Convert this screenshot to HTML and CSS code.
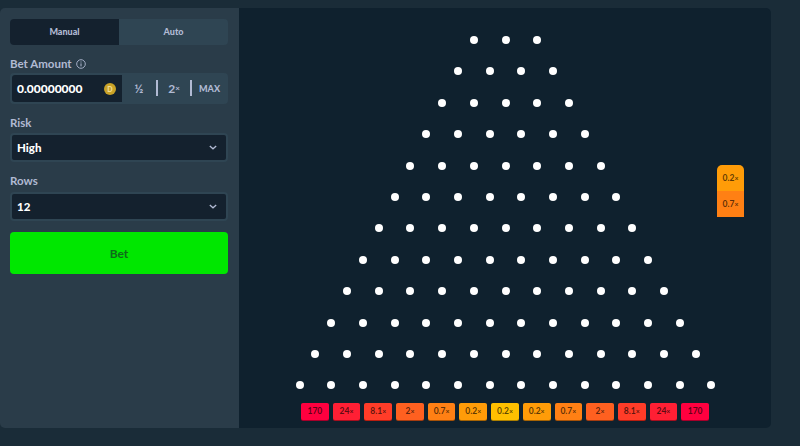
FILE: index.html
```html
<!DOCTYPE html>
<html lang="en">
<head>
    <meta charset="UTF-8">
    <title>Plinko</title>
    <link rel="stylesheet" href="styles.css">
</head>
<body>
    <div class="panel">
        <div class="sidebar">
            <div class="tabs">
                <div class="tab activo">Manual</div>
                <div class="tab">Auto</div>
            </div>
            <div class="etiqueta etiqueta-bet">Bet Amount
                <svg class="info" viewBox="0 0 10 10" width="10" height="10"><circle cx="5" cy="5" r="4.3" fill="none" stroke="#b1bad3" stroke-width="0.9"/><path d="M5 4.4v3M5 2.5v1" stroke="#b1bad3" stroke-width="1"/></svg>
            </div>
            <div class="apuesta">
                <div class="monto">
                    <span>0.00000000</span>
                    <span class="moneda">D</span>
                </div>
                <div class="accion">½</div>
                <div class="accion">2<small>×</small></div>
                <div class="accion max">MAX</div>
            </div>
            <div class="etiqueta">Risk</div>
            <div class="selector">
                <span>High</span>
                <svg viewBox="0 0 10 6" width="8" height="5"><path d="M1 1l4 3.6L9 1" fill="none" stroke="#b1bad3" stroke-width="1.6"/></svg>
            </div>
            <div class="etiqueta etiqueta-rows">Rows</div>
            <div class="selector">
                <span>12</span>
                <svg viewBox="0 0 10 6" width="8" height="5"><path d="M1 1l4 3.6L9 1" fill="none" stroke="#b1bad3" stroke-width="1.6"/></svg>
            </div>
            <button class="bet">Bet</button>
        </div>
        <div class="juego">
            <div class="tablero">
                <div class="fila"><i></i><i></i><i></i></div>
                <div class="fila"><i></i><i></i><i></i><i></i></div>
                <div class="fila"><i></i><i></i><i></i><i></i><i></i></div>
                <div class="fila"><i></i><i></i><i></i><i></i><i></i><i></i></div>
                <div class="fila"><i></i><i></i><i></i><i></i><i></i><i></i><i></i></div>
                <div class="fila"><i></i><i></i><i></i><i></i><i></i><i></i><i></i><i></i></div>
                <div class="fila"><i></i><i></i><i></i><i></i><i></i><i></i><i></i><i></i><i></i></div>
                <div class="fila"><i></i><i></i><i></i><i></i><i></i><i></i><i></i><i></i><i></i><i></i></div>
                <div class="fila"><i></i><i></i><i></i><i></i><i></i><i></i><i></i><i></i><i></i><i></i><i></i></div>
                <div class="fila"><i></i><i></i><i></i><i></i><i></i><i></i><i></i><i></i><i></i><i></i><i></i><i></i></div>
                <div class="fila"><i></i><i></i><i></i><i></i><i></i><i></i><i></i><i></i><i></i><i></i><i></i><i></i><i></i></div>
                <div class="fila"><i></i><i></i><i></i><i></i><i></i><i></i><i></i><i></i><i></i><i></i><i></i><i></i><i></i><i></i></div>
            </div>
            <div class="premios">
                <div class="premio c1">170</div>
                <div class="premio c2">24<small>×</small></div>
                <div class="premio c3">8.1<small>×</small></div>
                <div class="premio c4">2<small>×</small></div>
                <div class="premio c5">0.7<small>×</small></div>
                <div class="premio c6">0.2<small>×</small></div>
                <div class="premio c7">0.2<small>×</small></div>
                <div class="premio c6">0.2<small>×</small></div>
                <div class="premio c5">0.7<small>×</small></div>
                <div class="premio c4">2<small>×</small></div>
                <div class="premio c3">8.1<small>×</small></div>
                <div class="premio c2">24<small>×</small></div>
                <div class="premio c1">170</div>
            </div>
            <div class="recientes">
                <div class="reciente r1">0.2<small>×</small></div>
                <div class="reciente r2">0.7<small>×</small></div>
            </div>
        </div>
    </div>
</body>
</html>
```
FILE: styles.css
```css
body {
    margin: 0;
    padding-top: 8px;
    height: 446px;
    box-sizing: border-box;
    overflow: hidden;
    background-color: #1a2c38;
    font-family: Lato, "Liberation Sans", sans-serif;
    color: white;
}
.panel {
    display: flex;
    width: 771px;
    height: 420px;
    border-radius: 5px;
    overflow: hidden;
}
.sidebar {
    width: 239px;
    box-sizing: border-box;
    padding: 11px 11px 0 10px;
    background-color: #2a3c49;
}
.tabs {
    display: flex;
    height: 26px;
    border-radius: 4px;
    overflow: hidden;
    background-color: #2f4553;
}
.tab {
    flex: 1;
    display: flex;
    align-items: center;
    justify-content: center;
    padding-bottom: 1px;
    font-size: 9px;
    font-weight: 900;
    color: #b1bad3;
}
.activo {
    background-color: #14212e;
}
.etiqueta {
    display: flex;
    align-items: center;
    gap: 4px;
    height: 14px;
    margin-top: 11px;
    margin-bottom: 4px;
    font-size: 11.5px;
    font-weight: 700;
    color: #b1bad3;
}
.etiqueta-bet {
    margin-bottom: 3px;
}
.etiqueta-rows {
    margin-bottom: 5px;
}
.info {
    margin-top: 1px;
}
.apuesta {
    display: flex;
    height: 31px;
    box-sizing: border-box;
    padding: 2px 0 2px 2px;
    border-radius: 4px;
    background-color: #2f4553;
    align-items: stretch;
}
.monto {
    width: 110px;
    box-sizing: border-box;
    display: flex;
    align-items: center;
    justify-content: space-between;
    padding: 0 6px 0 5px;
    background-color: #14212e;
    border-radius: 3px 0 0 3px;
    font-size: 12px;
    font-weight: 900;
}
.moneda {
    width: 12px;
    height: 12px;
    border-radius: 50%;
    background-color: #c9a227;
    color: #f0dd97;
    font-size: 7px;
    line-height: 12px;
    text-align: center;
}
.accion {
    width: 34px;
    display: flex;
    align-items: center;
    justify-content: center;
    font-size: 12px;
    font-weight: 700;
    color: #b1bad3;
}
.accion small {
    font-size: 8px;
}
.accion + .accion {
    border-left: 2px solid #b1bad3;
    box-sizing: border-box;
    margin: 5px 0 6px;
}
.accion.max {
    width: 37px;
    font-size: 9px;
    font-weight: 900;
}
.selector {
    display: flex;
    align-items: center;
    justify-content: space-between;
    height: 29px;
    box-sizing: border-box;
    padding: 0 9px 0 5px;
    border: 2px solid #2f4553;
    border-radius: 4px;
    background-color: #14212e;
    font-size: 11.5px;
    font-weight: 900;
}
.bet {
    display: block;
    width: 100%;
    height: 42px;
    margin-top: 11px;
    border: none;
    border-radius: 4px;
    background-color: #00e700;
    color: #0e6a1a;
    font-family: inherit;
    font-size: 12px;
    font-weight: 700;
}
.juego {
    flex: 1;
    position: relative;
    display: flex;
    flex-direction: column;
    align-items: center;
    padding-top: 28px;
    background-color: #0f212e;
}
.tablero {
    display: flex;
    flex-direction: column;
    gap: 23.4px;
    margin-left: 1px;
}
.fila {
    display: flex;
    justify-content: center;
    gap: 23.7px;
    height: 8px;
}
.fila i {
    width: 8px;
    height: 8px;
    border-radius: 50%;
    background-color: white;
}
.premios {
    display: flex;
    gap: 4px;
    margin-top: 13.6px;
}
.premio {
    width: 27.7px;
    height: 17px;
    display: flex;
    align-items: center;
    justify-content: center;
    border-radius: 2px;
    font-size: 8.5px;
    font-weight: 700;
    color: rgba(0, 0, 0, 0.65);
}
.premio small, .reciente small {
    font-size: 7px;
}
.c1 { background-color: #ff003f; box-shadow: 0 1px 0 #a6002a; }
.c2 { background-color: #ff1f34; box-shadow: 0 1px 0 #a60f1f; }
.c3 { background-color: #ff3c28; box-shadow: 0 1px 0 #b81e10; }
.c4 { background-color: #ff6020; box-shadow: 0 1px 0 #a63c10; }
.c5 { background-color: #ff8014; box-shadow: 0 1px 0 #a65208; }
.c6 { background-color: #ff9c08; box-shadow: 0 1px 0 #a66404; }
.c7 { background-color: #ffc000; box-shadow: 0 1px 0 #ab7f00; }
.recientes {
    position: absolute;
    top: 157px;
    right: 27px;
    width: 27px;
    border-radius: 5px 5px 0 0;
    overflow: hidden;
}
.reciente {
    height: 26px;
    display: flex;
    align-items: center;
    justify-content: center;
    font-size: 8.5px;
    font-weight: 700;
    color: rgba(0, 0, 0, 0.65);
}
.r1 { background-color: #ff9c08; }
.r2 { background-color: #ff8014; }
```
